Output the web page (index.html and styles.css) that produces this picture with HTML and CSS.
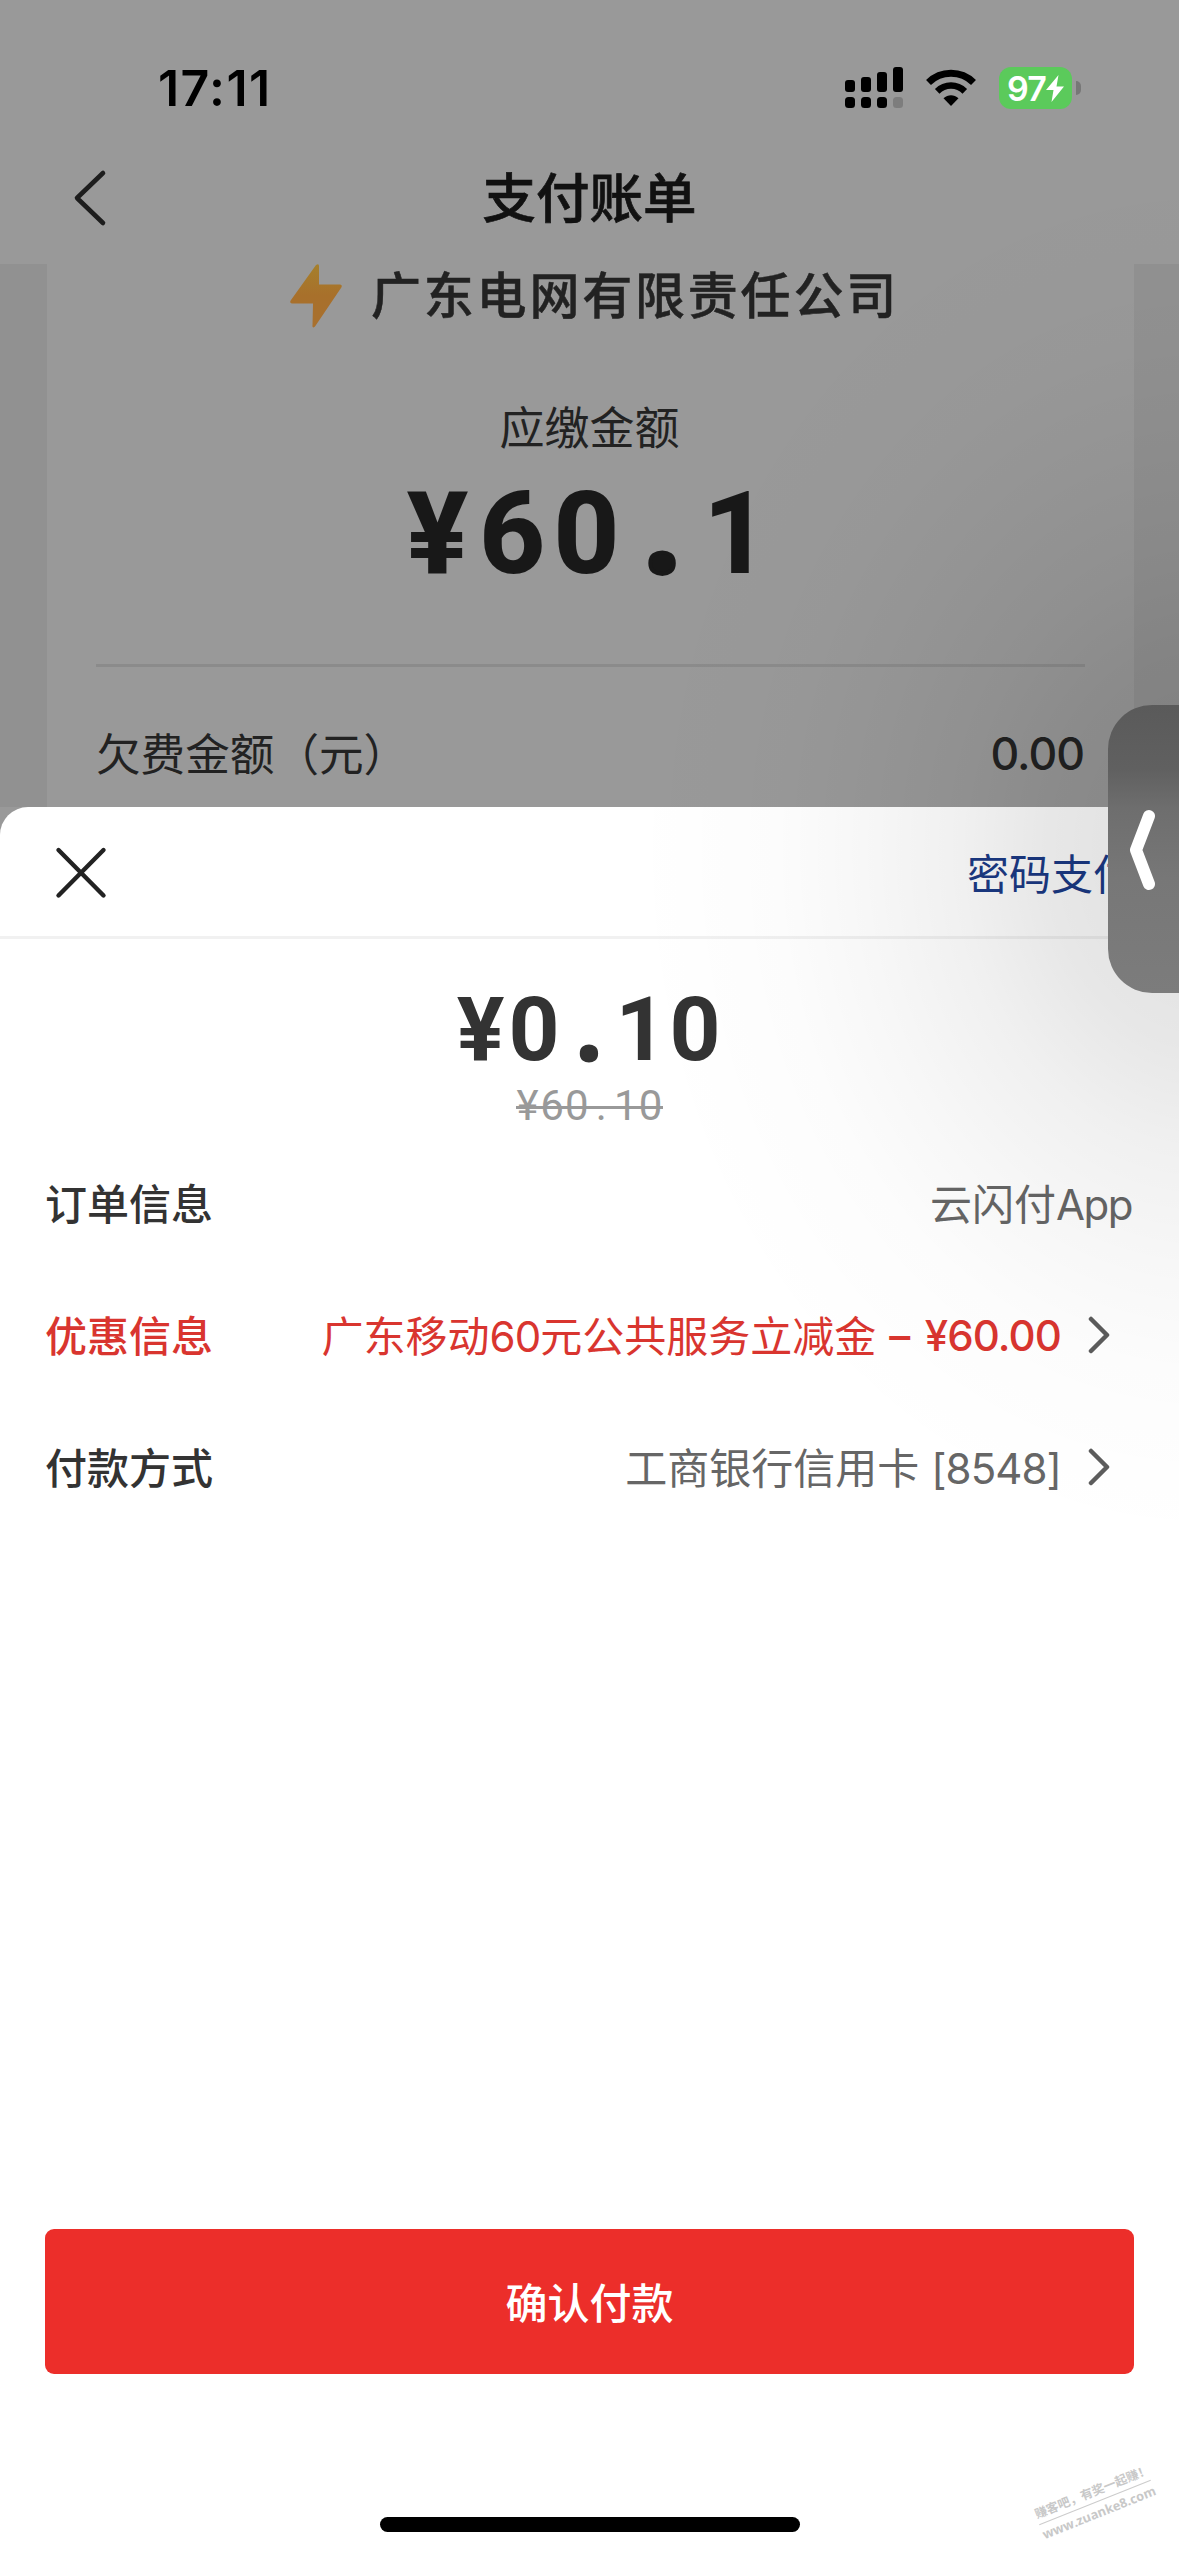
FILE: index.html
```html
<!DOCTYPE html>
<html lang="zh-CN">
<head>
<meta charset="utf-8">
<title>支付账单</title>
<link rel="stylesheet" href="styles.css">
</head>
<body>
<div class="screen">
  <div class="backdrop">
    <div class="status-bar">
      <span class="clock">17:11</span>
      <div class="status-icons">
        <svg class="signal" width="58" height="42" viewBox="0 0 58 42">
          <rect x="0" y="13" width="10" height="12" rx="3"/>
          <rect x="16" y="10" width="10" height="15" rx="3"/>
          <rect x="32" y="5" width="10" height="20" rx="3"/>
          <rect x="48" y="0" width="10" height="25" rx="3"/>
          <rect x="0" y="30" width="10" height="11" rx="3.5"/>
          <rect x="16" y="30" width="10" height="11" rx="3.5"/>
          <rect x="32" y="30" width="10" height="11" rx="3.5"/>
          <rect x="48" y="30" width="10" height="11" rx="3.5" fill="#7d7d7d"/>
        </svg>
        <svg class="wifi" width="50" height="38" viewBox="0 0 50 38">
          <path d="M2.500 13.500C15 1.200 35 1.200 47.500 13.500" fill="none" stroke="#000" stroke-width="7"/>
          <path d="M11.200 22.300C19 14.700 31 14.700 38.800 22.300" fill="none" stroke="#000" stroke-width="6.500"/>
          <path d="M17.500 29.200C22 25.200 28 25.200 32.500 29.200L25 37Z"/>
        </svg>
        <div class="battery">
          <span class="battery-body">97<svg width="18" height="27" viewBox="0 0 18 27"><path d="M12.500 0L0 15H7.500L5.500 27L18 11.500H10.500Z" fill="#fff"/></svg></span>
          <span class="battery-cap"></span>
        </div>
      </div>
    </div>
    <div class="nav-bar">
      <svg class="back" width="34" height="58" viewBox="0 0 34 58"><path d="M30 4L4 29L30 54" fill="none" stroke="#1d1d1d" stroke-width="4.600" stroke-linecap="round" stroke-linejoin="round"/></svg>
      <h1 class="nav-title">支付账单</h1>
    </div>
    <div class="bill-area">
      <div class="bill-card">
        <div class="company">
          <svg width="52" height="64" viewBox="0 0 52 64">
            <defs><linearGradient id="bolt" x1="0" y1="0" x2="0" y2="1"><stop offset="0" stop-color="#a5802c"/><stop offset=".5" stop-color="#a8702b"/><stop offset="1" stop-color="#a8702f"/></linearGradient></defs>
            <path d="M26 1Q29-1 29 2V20.500H50Q53 21 51 24L25 62.500Q22 65 22.500 61L23 39.500H2Q-1 39 1 36Z" fill="url(#bolt)"/>
          </svg>
          <span class="company-name">广东电网有限责任公司</span>
        </div>
        <div class="due-label">应缴金额</div>
        <div class="due-amount"><span class="yen">¥</span>60<span class="dot">.</span>1</div>
        <div class="arrears">
          <span>欠费金额（元）</span>
          <span class="arrears-value">0.00</span>
        </div>
      </div>
    </div>
  </div>

  <div class="sheet">
    <div class="sheet-header">
      <svg width="54" height="54" viewBox="0 0 54 54"><path d="M4.500 5L49.500 50.500M49.500 5L4.500 50.500" stroke="#222" stroke-width="4.400" stroke-linecap="round"/></svg>
      <span class="password-pay">密码支付</span>
    </div>
    <div class="pay-amount"><span class="yen">¥</span>0<span class="dot">.</span>10</div>
    <div class="origin-amount"><span class="yen">¥</span>60<span class="dot">.</span>10</div>
    <div class="rows">
      <div class="row">
        <span class="row-label">订单信息</span>
        <span class="row-value">云闪付<span class="app-name">App</span></span>
      </div>
      <div class="row row-promo">
        <span class="row-label">优惠信息</span>
        <span class="row-value">广东移动<span class="latin">60</span>元公共服务立减金</span>
        <span class="promo-amount">– ¥60.00</span>
        <svg class="arrow" width="25" height="38" viewBox="0 0 25 38"><path d="M4 3L20 19L4 35" fill="none" stroke="#5c5c5c" stroke-width="4.500" stroke-linecap="round" stroke-linejoin="round"/></svg>
      </div>
      <div class="row">
        <span class="row-label">付款方式</span>
        <span class="row-value">工商银行信用卡 <span class="latin">[8548]</span></span>
        <svg class="arrow" width="25" height="38" viewBox="0 0 25 38"><path d="M4 3L20 19L4 35" fill="none" stroke="#5c5c5c" stroke-width="4.500" stroke-linecap="round" stroke-linejoin="round"/></svg>
      </div>
    </div>
    <div class="confirm">确认付款</div>
    <div class="home-indicator"></div>
  </div>

  <div class="handle-shade"></div>
  <div class="side-handle">
    <svg width="28" height="84" viewBox="0 0 28 84"><path d="M21 8L8 42L21 76" fill="none" stroke="#fff" stroke-width="12" stroke-linecap="round" stroke-linejoin="round"/></svg>
  </div>
  <div class="watermark"><span class="watermark-slogan">赚客吧，有奖一起赚！</span><span class="watermark-site">www.zuanke8.com</span></div>
</div>
</body>
</html>
```
FILE: styles.css
```css
* { box-sizing: border-box; }

body {
  margin: 0;
  font-family: Inter, "Noto Sans CJK SC", sans-serif;
  color: #333;
}

svg { display: block; flex: none; }

.screen {
  position: relative;
  display: flex;
  flex-direction: column;
  width: 1179px;
  height: 2556px;
  overflow: hidden;
  background: #999;
}

/* Dimmed bill page */
.backdrop {
  display: flex;
  flex-direction: column;
  height: 807px;
}

.status-bar {
  display: flex;
  justify-content: space-between;
  align-items: center;
  height: 142px;
  padding: 34px 98px 0 158px;
}

.clock {
  font-size: 50px;
  font-weight: 600;
  line-height: 60px;
  letter-spacing: 1.4px;
  color: #000;
}

.status-icons {
  display: flex;
  align-items: center;
  gap: 23px;
}

.battery {
  display: flex;
  align-items: center;
  gap: 4px;
}

.battery-body {
  display: flex;
  align-items: center;
  justify-content: center;
  width: 73px;
  height: 42px;
  border-radius: 12px;
  background: #5bca5b;
  color: #fff;
  font-size: 34px;
  font-weight: 600;
  letter-spacing: -0.8px;
}

.battery-cap {
  width: 5px;
  height: 14px;
  border-radius: 0 6px 6px 0;
  background: #777;
}

.nav-bar {
  display: grid;
  grid-template-columns: 200px 1fr 200px;
  align-items: center;
  height: 122px;
  padding-bottom: 10px;
}

.back { margin-left: 73px; }

.nav-title {
  margin: 0;
  padding-top: 2px;
  text-align: center;
  font-size: 53.500px;
  font-weight: 500;
  line-height: 80px;
  color: #111;
  -webkit-text-stroke: 0.7px #111;
}

.bill-area {
  flex: 1;
  padding: 0 45px 0 47px;
  background: #919191;
}

.bill-card {
  height: 100%;
  padding: 0 49px;
  background: #999;
  color: #222;
}

.company {
  display: flex;
  align-items: center;
  height: 64px;
  padding-left: 194px;
  gap: 29px;
  font-size: 50px;
  font-weight: 500;
  letter-spacing: 2.8px;
  white-space: nowrap;
}

.company-name {
  padding-bottom: 8px;
  -webkit-text-stroke: 0.5px #222;
}

.due-label {
  margin-top: 71px;
  padding-right: 2px;
  text-align: center;
  font-size: 45px;
  line-height: 60px;
}

.due-amount,
.pay-amount,
.origin-amount {
  display: flex;
  justify-content: center;
  align-items: baseline;
  font-family: Roboto, sans-serif;
}

.due-amount {
  height: 208px;
  padding-top: 3px;
  border-bottom: 3px solid #8b8b8b;
  font-size: 115px;
  font-weight: 800;
  line-height: 134px;
  letter-spacing: 8px;
  color: #181818;
}

.yen, .dot { display: inline-block; text-align: center; }

.due-amount .dot,
.pay-amount .dot {
  font-family: "Open Sans", sans-serif;
  letter-spacing: 0;
  -webkit-text-stroke: 0.035em currentColor;
}

.due-amount .yen { width: 75px; }

.due-amount .dot {
  width: 75px;
  padding-right: 6px;
}

.arrears {
  display: flex;
  justify-content: space-between;
  align-items: center;
  margin-top: 54px;
  height: 60px;
  font-size: 44.600px;
}

.arrears-value {
  padding: 5px 1px 0 0;
  font-weight: 500;
  letter-spacing: -1px;
}

/* Payment sheet */
.sheet {
  display: flex;
  flex-direction: column;
  align-items: center;
  flex: 1;
  border-radius: 28px 28px 0 0;
  background: #fff;
}

.sheet-header {
  display: flex;
  justify-content: space-between;
  align-items: center;
  width: 100%;
  height: 132px;
  padding: 0 44px 0 54px;
  border-bottom: 3px solid #f1f1f1;
}

.password-pay {
  font-size: 42px;
  color: #1b3a86;
}

.pay-amount {
  height: 107px;
  margin-top: 35px;
  font-size: 89px;
  font-weight: 700;
  line-height: 104px;
  letter-spacing: 2.9px;
}

.pay-amount .yen, .pay-amount .dot { width: 53px; }

.origin-amount {
  height: 50px;
  font-size: 42px;
  line-height: 50px;
  letter-spacing: 1px;
  color: #999;
  background: linear-gradient(#999, #999) 0 25px / 100% 3px no-repeat;
}

.origin-amount .yen, .origin-amount .dot { width: 24.600px; }

.rows {
  width: 100%;
  margin-top: 4px;
  padding: 0 47px 0 45px;
  font-size: 42px;
}

.row {
  display: flex;
  align-items: center;
  height: 132px;
}

.row-label { font-weight: 500; margin-right: auto; }
.row-value { color: #666; white-space: nowrap; }
.latin { letter-spacing: -0.9px; }
.app-name { letter-spacing: -1.5px; }

.row-promo,
.row-promo .row-value { color: #d9352f; }

.promo-amount {
  margin-left: 13px;
  padding-top: 4px;
  font-weight: 500;
  letter-spacing: -0.9px;
  word-spacing: 5px;
  white-space: nowrap;
}

.arrow { margin: 3px 20px 0 26px; }

.confirm {
  display: flex;
  align-items: center;
  justify-content: center;
  width: 1089px;
  height: 145px;
  margin-top: 698px;
  padding-bottom: 2px;
  border-radius: 9px;
  background: #ec2e2a;
  color: #fff;
  font-size: 42px;
  font-weight: 500;
}

.home-indicator {
  width: 420px;
  height: 15px;
  margin-top: 143px;
  border-radius: 8px;
  background: #000;
}

/* Soft shade cast by the drawer handle */
.handle-shade {
  position: absolute;
  top: 150px;
  right: 0;
  width: 650px;
  height: 1400px;
  background: radial-gradient(580px 700px at 680px 700px,
    rgba(0, 0, 0, 0.13) 0,
    rgba(0, 0, 0, 0.095) 28%,
    rgba(0, 0, 0, 0.06) 43%,
    rgba(0, 0, 0, 0.032) 60%,
    rgba(0, 0, 0, 0.013) 75%,
    transparent 100%);
}

/* Floating drawer handle at the right edge */
.side-handle {
  position: absolute;
  top: 705px;
  right: 0;
  width: 71px;
  height: 288px;
  padding: 103px 0 0 20px;
  border-radius: 44px 0 0 44px;
  background: linear-gradient(#5a5a5a, #606060 22%, #6e6e6e 36%, #777 60%, #7c7c7c);
}

.watermark {
  position: absolute;
  left: 1030px;
  top: 2482px;
  display: flex;
  flex-direction: column;
  align-items: center;
  width: 130px;
  transform: rotate(-21.800deg);
  color: #c8c8c8;
  font-size: 12.300px;
  font-weight: 600;
  line-height: 20px;
  white-space: nowrap;
}

.watermark-slogan {
  width: 120px;
  border-bottom: 1px solid #ccc;
}

.watermark-site {
  font-family: "Open Sans", sans-serif;
  font-size: 12.800px;
  font-weight: 700;
}
```
